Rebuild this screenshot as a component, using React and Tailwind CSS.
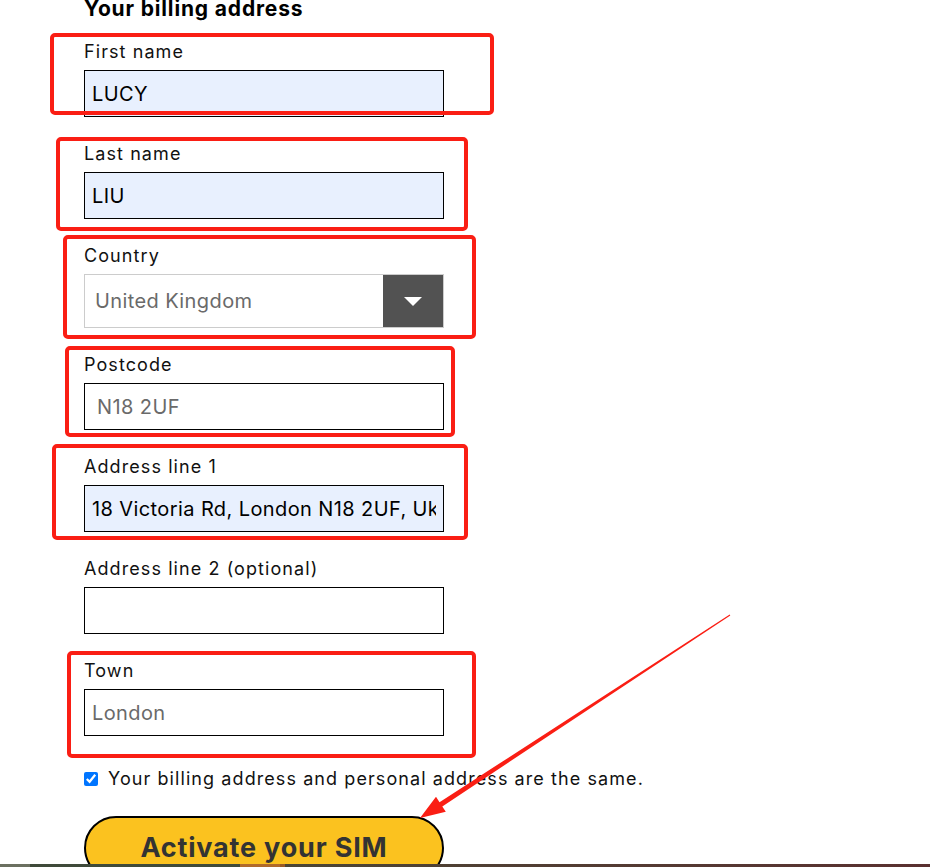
import React from 'react';

const font = { fontFamily: 'Inter, "Noto Sans", sans-serif' };

const Field = ({ label, children }) => (
    <div className="flex flex-col">
        <label className="text-[18px] leading-[25px] tracking-[0.06em] text-[#111] mt-[1px] mb-[6px]">{label}</label>
        {children}
    </div>
);

const TextBox = ({ value, filled, muted, pad = 'px-[7px]' }) => (
    <input
        readOnly
        value={value}
        className={`w-[360px] h-[47px] border border-black ${pad} text-[20px] tracking-[0.02em] outline-none ${filled ? 'bg-[#e8f0fe]' : 'bg-white'} ${muted ? 'text-[#6a6a6a]' : 'text-black'}`}
        style={font}
    />
);

// red annotation frames drawn over the form
const marks = [
    'left-[50px] top-[33px] w-[444px] h-[82px]',
    'left-[56px] top-[137px] w-[412px] h-[94px]',
    'left-[63px] top-[235px] w-[413px] h-[104px]',
    'left-[65px] top-[346px] w-[390px] h-[91px]',
    'left-[52px] top-[444px] w-[416px] h-[96px]',
    'left-[67px] top-[651px] w-[409px] h-[107px]',
];

export default function App() {
    return (
        <div className="bg-white w-[930px]" style={font}>
            <div className="relative h-[864px] overflow-hidden pl-[84px]">
                <h2 className="text-[21px] leading-[24px] tracking-[0.04em] font-bold text-black mt-[-3px] mb-[17px]">Your billing address</h2>

                <div className="flex flex-col gap-[23px]">
                    <Field label="First name"><TextBox value="LUCY" filled /></Field>
                    <Field label="Last name"><TextBox value="LIU" filled /></Field>
                    <Field label="Country">
                        <div className="w-[360px] h-[54px] border border-[#cccccc] flex">
                            <div className="flex-1 flex items-center pl-[10px] text-[20px] tracking-[0.02em] text-[#6a6a6a]">United Kingdom</div>
                            <div className="w-[60px] bg-[#525252] flex items-center justify-center">
                                <svg width="18" height="9" viewBox="0 0 18 9"><path d="M0 0h18L9 9z" fill="#fff" /></svg>
                            </div>
                        </div>
                    </Field>
                    <Field label="Postcode"><TextBox value="N18 2UF" muted pad="px-[12px]" /></Field>
                    <Field label="Address line 1"><TextBox value="18 Victoria Rd, London N18 2UF, Uk" filled /></Field>
                    <Field label="Address line 2 (optional)"><TextBox value="" /></Field>
                    <Field label="Town"><TextBox value="London" muted /></Field>
                </div>

                <div className="flex items-center gap-[10px] mt-[30px] h-[25px]">
                    <input type="checkbox" defaultChecked className="w-[14px] h-[14px] accent-[#0075ff]" />
                    <span className="text-[18px] tracking-[0.06em] text-[#111]">Your billing address and personal address are the same.</span>
                </div>

                <button className="mt-[25px] w-[360px] h-[64px] rounded-full bg-[#fbc21f] border-2 border-black text-[27px] tracking-[0.03em] font-bold text-[#333]">
                    Activate your SIM
                </button>

                {marks.map((m) => (
                    <div key={m} className={`absolute ${m} border-4 border-[#fa1e14] rounded-[5px] pointer-events-none`} />
                ))}

                <svg className="absolute left-0 top-0 pointer-events-none" width="930" height="864">
                    <polygon
                        fill="#fa1e14"
                        points="730.3,615.4 442.3,806.4 445.8,811.8 420,818 436,796.8 439.5,802.2 729.7,614.6"
                    />
                </svg>
            </div>

            <div className="flex h-[40px]">
                <div className="w-[30px] bg-[#6b7060]" />
                <div className="w-[210px] bg-[#3f4a3a]" />
                <div className="w-[40px] bg-[#b06a2a]" />
                <div className="w-[5px] bg-[#9a5a25]" />
                <div className="flex-1 bg-gradient-to-r from-[#4a4535] to-[#5a3030]" />
            </div>
        </div>
    );
}
